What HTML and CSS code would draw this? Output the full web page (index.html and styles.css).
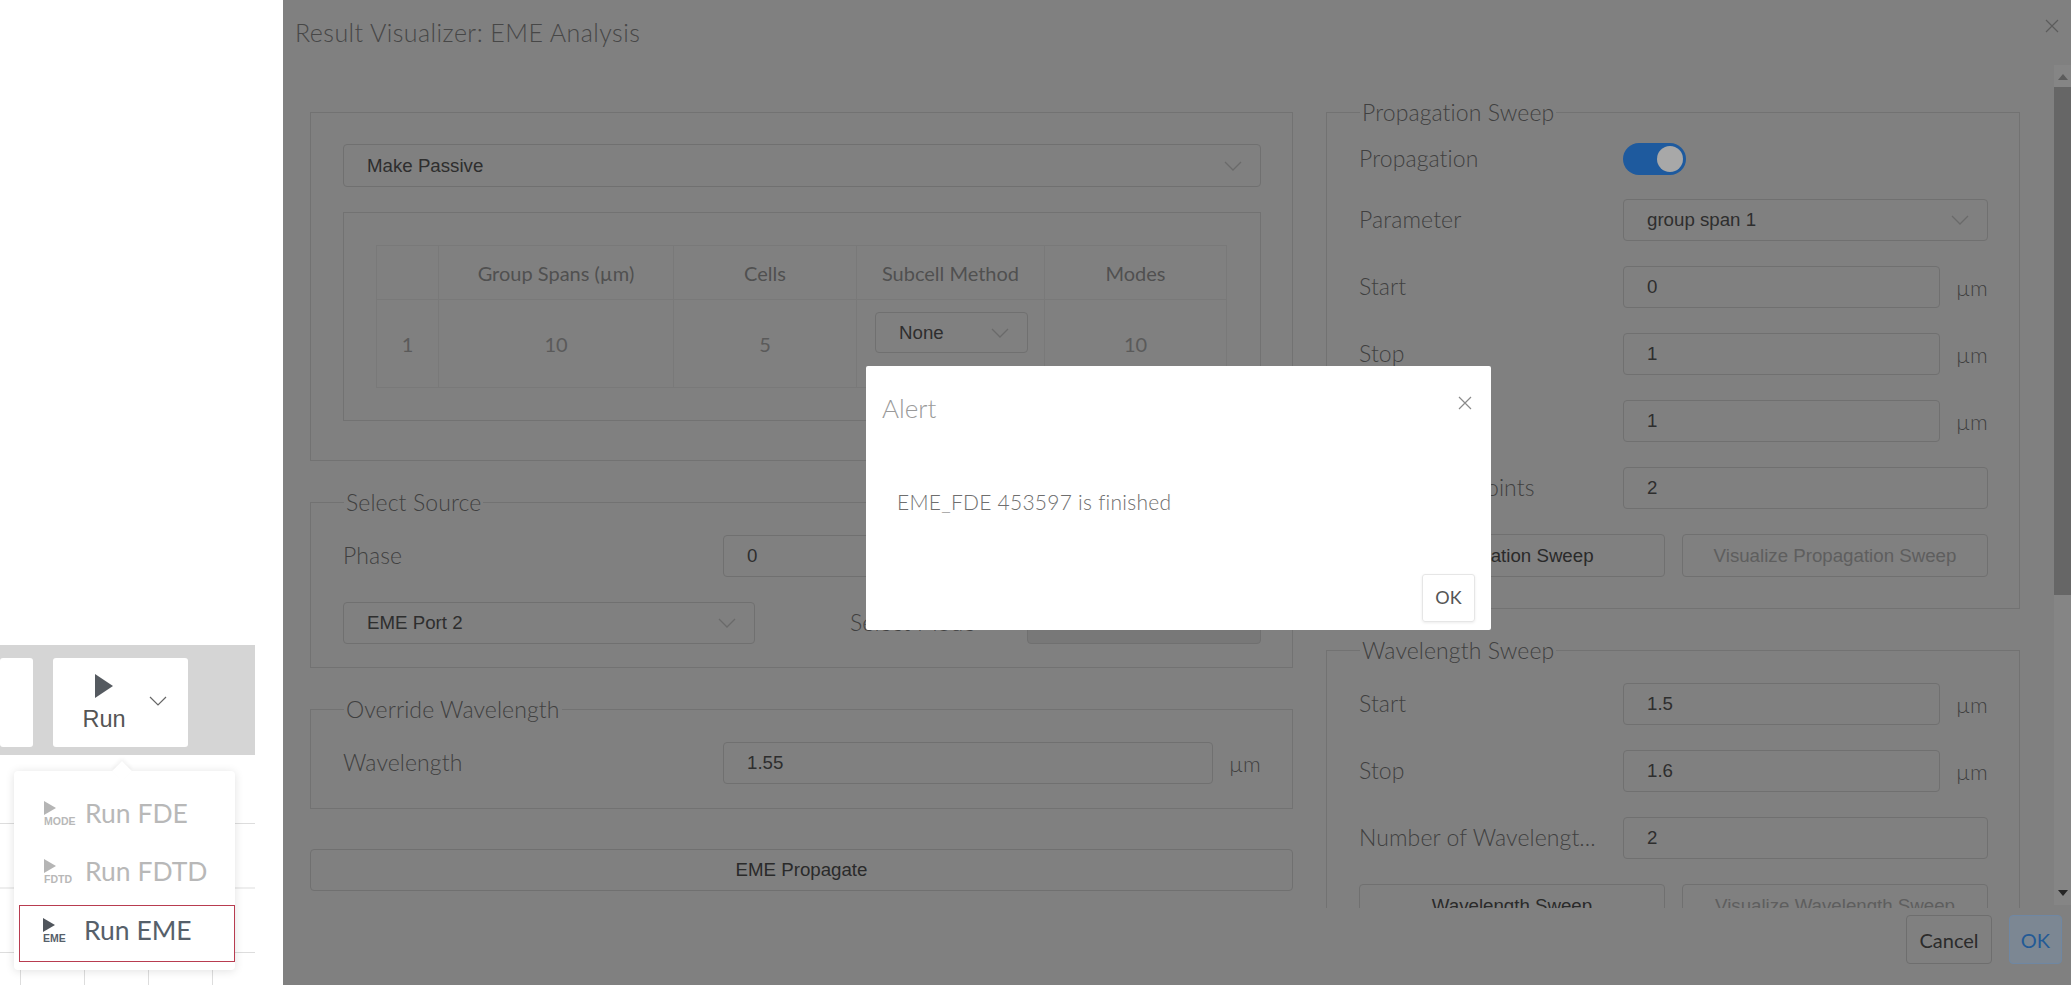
FILE: index.html
```html
<!DOCTYPE html>
<html>
<head>
    <meta charset="UTF-8">
    <link rel="stylesheet" href="styles.css">
</head>
<body>
<div class="workspace">
    <div class="toolbar">
        <div class="tool-btn tool-btn-cut"></div>
        <div class="tool-btn tool-run">
            <div class="run-stack">
                <svg class="run-play" width="20" height="24" viewBox="0 0 20 24"><path d="M1 0 L19 12 L1 24 Z" fill="#555a60"/></svg>
                <span>Run</span>
            </div>
            <svg class="run-chevron" width="18" height="10" viewBox="0 0 18 10"><path d="M1 1 L9 9 L17 1" fill="none" stroke="#666" stroke-width="1.2"/></svg>
        </div>
    </div>
    <div class="canvas">
        <div class="canvas-grid"></div>
    </div>
    <div class="run-menu">
        <div class="run-menu-item disabled">
            <div class="mini-icon">
                <svg width="12" height="14" viewBox="0 0 12 14"><path d="M0 0 L12 7 L0 14 Z" fill="#b5b5b5"/></svg>
                <span>MODE</span>
            </div>
            <span>Run FDE</span>
        </div>
        <div class="run-menu-item disabled">
            <div class="mini-icon">
                <svg width="12" height="14" viewBox="0 0 12 14"><path d="M0 0 L12 7 L0 14 Z" fill="#b5b5b5"/></svg>
                <span>FDTD</span>
            </div>
            <span>Run FDTD</span>
        </div>
        <div class="run-menu-item selected">
            <div class="mini-icon">
                <svg width="12" height="14" viewBox="0 0 12 14"><path d="M0 0 L12 7 L0 14 Z" fill="#50555c"/></svg>
                <span>EME</span>
            </div>
            <span>Run EME</span>
        </div>
    </div>
</div>

<div class="visualizer">
    <div class="vis-header">
        <span class="vis-title">Result Visualizer: EME Analysis</span>
        <svg class="vis-close" width="14" height="14" viewBox="0 0 14 14"><path d="M1 1 L13 13 M13 1 L1 13" stroke="#5c5c5c" stroke-width="1.2"/></svg>
    </div>

    <div class="vis-body">
        <div class="vis-scroll">
            <div class="col col-left">
                <fieldset class="group group-plain">
                    <div class="select wide"><span>Make Passive</span><svg class="chev" width="18" height="10" viewBox="0 0 18 10"><path d="M1 1 L9 9 L17 1"/></svg></div>
                    <div class="table-box">
                        <table class="span-table">
                            <tr class="head">
                                <th class="c1"></th>
                                <th class="c2">Group Spans (µm)</th>
                                <th class="c3">Cells</th>
                                <th class="c4">Subcell Method</th>
                                <th class="c5">Modes</th>
                            </tr>
                            <tr class="data">
                                <td>1</td>
                                <td>10</td>
                                <td>5</td>
                                <td class="top">
                                    <div class="select cell-select"><span>None</span><svg class="chev" width="18" height="10" viewBox="0 0 18 10"><path d="M1 1 L9 9 L17 1"/></svg></div>
                                </td>
                                <td>10</td>
                            </tr>
                        </table>
                    </div>
                </fieldset>

                <fieldset class="group">
                    <legend>Select Source</legend>
                    <div class="rows">
                        <div class="row">
                            <label class="label label-left">Phase</label>
                            <div class="field">0</div>
                            <span class="unit">deg</span>
                        </div>
                        <div class="row">
                            <div class="select port-select"><span>EME Port 2</span><svg class="chev" width="18" height="10" viewBox="0 0 18 10"><path d="M1 1 L9 9 L17 1"/></svg></div>
                            <label class="label mode-label">Select Mode</label>
                            <div class="field field-disabled"></div>
                        </div>
                    </div>
                </fieldset>

                <fieldset class="group group-single">
                    <legend>Override Wavelength</legend>
                    <div class="rows">
                        <div class="row">
                            <label class="label label-left">Wavelength</label>
                            <div class="field">1.55</div>
                            <span class="unit">µm</span>
                        </div>
                    </div>
                </fieldset>

                <div class="btn btn-propagate">EME Propagate</div>
            </div>

            <div class="col col-right">
                <fieldset class="group">
                    <legend>Propagation Sweep</legend>
                    <div class="rows">
                        <div class="row row-toggle">
                            <label class="label">Propagation</label>
                            <div class="toggle"><div class="knob"></div></div>
                        </div>
                        <div class="row">
                            <label class="label">Parameter</label>
                            <div class="select grow"><span>group span 1</span><svg class="chev" width="18" height="10" viewBox="0 0 18 10"><path d="M1 1 L9 9 L17 1"/></svg></div>
                        </div>
                        <div class="row">
                            <label class="label">Start</label>
                            <div class="field">0</div>
                            <span class="unit">µm</span>
                        </div>
                        <div class="row">
                            <label class="label">Stop</label>
                            <div class="field">1</div>
                            <span class="unit">µm</span>
                        </div>
                        <div class="row">
                            <label class="label">Step</label>
                            <div class="field">1</div>
                            <span class="unit">µm</span>
                        </div>
                        <div class="row">
                            <label class="label">Number of points</label>
                            <div class="field">2</div>
                        </div>
                        <div class="row btn-row">
                            <div class="btn">Propagation Sweep</div>
                            <div class="btn btn-off">Visualize Propagation Sweep</div>
                        </div>
                    </div>
                </fieldset>

                <fieldset class="group">
                    <legend>Wavelength Sweep</legend>
                    <div class="rows">
                        <div class="row">
                            <label class="label">Start</label>
                            <div class="field">1.5</div>
                            <span class="unit">µm</span>
                        </div>
                        <div class="row">
                            <label class="label">Stop</label>
                            <div class="field">1.6</div>
                            <span class="unit">µm</span>
                        </div>
                        <div class="row">
                            <label class="label">Number of Wavelengt...</label>
                            <div class="field">2</div>
                        </div>
                        <div class="row btn-row">
                            <div class="btn">Wavelength Sweep</div>
                            <div class="btn btn-off">Visualize Wavelength Sweep</div>
                        </div>
                    </div>
                </fieldset>
            </div>
        </div>

        <div class="scrollbar">
            <div class="arrow-up"></div>
            <div class="thumb"></div>
            <div class="arrow-down"></div>
        </div>
    </div>

    <div class="vis-footer">
        <div class="foot-btn">Cancel</div>
        <div class="foot-btn foot-ok">OK</div>
    </div>
</div>

<div class="alert">
    <div class="alert-head">
        <span class="alert-title">Alert</span>
        <svg class="alert-close" width="14" height="14" viewBox="0 0 14 14"><path d="M1 1 L13 13 M13 1 L1 13" stroke="#8a8a8a" stroke-width="1.2"/></svg>
    </div>
    <div class="alert-text">EME_FDE 453597 is finished</div>
    <div class="alert-foot">
        <div class="alert-ok">OK</div>
    </div>
</div>
</body>
</html>
```

FILE: styles.css
```css
* {
    margin: 0;
    padding: 0;
    box-sizing: border-box;
}

body {
    width: 2071px;
    height: 985px;
    overflow: hidden;
    display: flex;
    background-color: #ffffff;
    font-family: Lato, "Open Sans", sans-serif;
    font-weight: 300;
    position: relative;
}

/* left side, not dimmed */
.workspace {
    width: 283px;
    flex: none;
    position: relative;
    display: flex;
    flex-direction: column;
    padding-top: 645px;
}

.toolbar {
    width: 255px;
    height: 110px;
    background-color: #d5d5d5;
    display: flex;
    gap: 20px;
    padding-top: 13px;
}

.tool-btn {
    height: 89px;
    background-color: #ffffff;
    border-radius: 3px;
}

.tool-btn-cut {
    width: 33px;
}

.tool-run {
    width: 135px;
    display: flex;
    align-items: flex-start;
}

.run-stack {
    width: 102px;
    padding-top: 16px;
    display: flex;
    flex-direction: column;
    align-items: center;
    font-family: "Liberation Sans", sans-serif;
    font-weight: 400;
    font-size: 23.5px;
    color: #555;
    line-height: 28px;
}

.run-play {
    display: block;
    margin-bottom: 7px;
}

.run-chevron {
    margin-top: 38px;
    margin-left: -6px;
}

.canvas {
    width: 255px;
    flex: 1;
    display: flex;
    padding-top: 68px;
}

.canvas-grid {
    flex: 1;
    background-image:
        linear-gradient(#dddddd 1px, transparent 1px),
        linear-gradient(90deg, #dddddd 1px, transparent 1px);
    background-size: 64px 64.5px;
    background-position: 20px 0;
}

.run-menu {
    position: absolute;
    left: 14px;
    top: 771px;
    width: 221px;
    height: 199px;
    background-color: #ffffff;
    border-radius: 4px;
    box-shadow: 0 1px 10px rgba(0, 0, 0, 0.12);
    padding-top: 13px;
    display: flex;
    flex-direction: column;
}

.run-menu::before {
    content: "";
    position: absolute;
    left: 101px;
    top: -7px;
    width: 14px;
    height: 14px;
    background-color: #ffffff;
    transform: rotate(45deg);
    box-shadow: -2px -2px 4px rgba(0, 0, 0, 0.05);
}

.run-menu-item {
    height: 58px;
    display: flex;
    align-items: center;
    font-size: 26.5px;
    font-family: Lato, sans-serif;
    font-weight: 400;
    color: #56606a;
    padding-left: 25px;
    gap: 8px;
    margin-left: 5px;
    position: relative;
}

.run-menu-item.disabled {
    color: #b8b8b8;
}

.run-menu-item.selected {
    height: 57px;
    margin-top: 5px;
    border: 1.5px solid #b83c50;
    padding-left: 23px;
    padding-bottom: 7px;
}

.mini-icon {
    width: 33px;
    display: flex;
    flex-direction: column;
    align-items: flex-start;
    font-family: "Liberation Sans", sans-serif;
    font-weight: 700;
    font-size: 10.5px;
    line-height: 10px;
}

.mini-icon svg {
    display: block;
}

.mini-icon span {
    margin-top: 1px;
}

/* dimmed dialog */
.visualizer {
    flex: 1;
    background-color: #808080;
    display: flex;
    flex-direction: column;
    height: 985px;
}

.vis-header {
    height: 66px;
    flex: none;
    display: flex;
    justify-content: space-between;
    padding: 17px 12px 0 12px;
}

.vis-title {
    font-size: 25px;
    letter-spacing: 0.45px;
    line-height: 30px;
    color: #474747;
}

.vis-close {
    margin-top: 2px;
}

.vis-body {
    height: 842px;
    flex: none;
    display: flex;
}

.vis-scroll {
    flex: 1;
    overflow: hidden;
    display: flex;
    gap: 33px;
    padding-left: 27px;
    padding-right: 34px;
}

.col {
    display: flex;
    flex-direction: column;
    gap: 29px;
}

.col-left {
    width: 983px;
    padding-top: 46px;
}

.col-right {
    width: 694px;
    padding-top: 34px;
}

.group {
    border: 1px solid #727272;
    padding: 0 31px 23px 32px;
    min-width: 0;
}

.col-right .group {
    padding-bottom: 31px;
}

.group-single {
    padding-bottom: 24px;
}

.group legend {
    margin-left: 1px;
    padding: 0 2px;
    height: 24px;
    line-height: 24px;
    font-size: 23px;
    letter-spacing: 0.1px;
    color: #404040;
}

.group-plain {
    padding: 31px 31px 39px 32px;
    height: 349px;
}

.rows {
    padding-top: 21px;
    display: flex;
    flex-direction: column;
    gap: 25px;
}

.row {
    display: flex;
    align-items: center;
    height: 42px;
}

.row-toggle {
    height: 32px;
    margin-top: -2px;
    margin-bottom: -1px;
}

.label {
    flex: none;
    width: 264px;
    font-size: 23px;
    letter-spacing: 0.1px;
    padding-bottom: 2px;
    color: #404040;
    white-space: nowrap;
}

.label-left {
    width: 380px;
}

.field, .select {
    height: 42px;
    border: 1px solid #707070;
    border-radius: 4px;
    font-family: "Liberation Sans", sans-serif;
    font-weight: 400;
    font-size: 18.7px;
    color: #2e2e2e;
    display: flex;
    align-items: center;
    padding-left: 23px;
}

.field {
    flex: 1;
}

.field-disabled {
    flex: none;
    width: 234px;
    background-color: #787878;
}

.select {
    justify-content: space-between;
    padding-right: 18px;
}

.grow {
    flex: 1;
}

.select.wide {
    height: 43px;
}

.chev {
    flex: none;
}

.chev path {
    fill: none;
    stroke: #6a6a6a;
    stroke-width: 1.3;
}

.unit {
    flex: none;
    width: 32px;
    margin-left: 16px;
    font-size: 22px;
    color: #404040;
}

.port-select {
    width: 412px;
}

.mode-label {
    width: 177px;
    margin-left: 95px;
}

.table-box {
    margin-top: 25px;
    border: 1px solid #727272;
    height: 209px;
    padding: 32px;
}

.span-table {
    width: 850px;
    table-layout: fixed;
    border-collapse: collapse;
    font-size: 20px;
    font-weight: 400;
    color: #5a5a5a;
    text-align: center;
}

.span-table th, .span-table td {
    border: 1px solid #797979;
}

.span-table th {
    font-weight: 400;
    color: #505050;
}

.head {
    height: 54px;
}

.data {
    height: 88px;
}

.c1 { width: 62px; }
.c2 { width: 235px; }
.c3 { width: 183px; }
.c4 { width: 188px; }
.c5 { width: 182px; }

.span-table td.top {
    vertical-align: top;
    padding: 12px 16px 0 18px;
}

.cell-select {
    height: 41px;
    text-align: left;
}

.btn {
    height: 42px;
    border: 1px solid #707070;
    border-radius: 4px;
    font-family: "Liberation Sans", sans-serif;
    font-weight: 400;
    font-size: 18.7px;
    color: #2a2a2a;
    display: flex;
    align-items: center;
    justify-content: center;
}

.btn-propagate {
    flex: none;
    margin-top: 11px;
}

.btn-row {
    gap: 17px;
    height: 43px;
}

.btn-row .btn {
    flex: 1;
    height: 43px;
}

.btn-off {
    color: #5e5e5e;
}

.toggle {
    width: 63px;
    height: 32px;
    border-radius: 16px;
    background-color: #1e5a9e;
    display: flex;
    justify-content: flex-end;
    align-items: center;
    padding-right: 3px;
}

.knob {
    width: 26px;
    height: 26px;
    border-radius: 50%;
    background-color: #a8a8a8;
}

.scrollbar {
    flex: none;
    width: 17px;
    height: 840px;
    background-color: #858585;
    display: flex;
    flex-direction: column;
    align-items: center;
    margin-top: -1px;
}

.arrow-up {
    width: 0;
    height: 0;
    margin: 9px 0 7px;
    border-left: 5px solid transparent;
    border-right: 5px solid transparent;
    border-bottom: 6px solid #5c5c5c;
}

.thumb {
    width: 17px;
    height: 508px;
    background-color: #666666;
}

.arrow-down {
    width: 0;
    height: 0;
    margin-top: auto;
    margin-bottom: 9px;
    border-left: 5px solid transparent;
    border-right: 5px solid transparent;
    border-top: 6px solid #262626;
}

.vis-footer {
    flex: 1;
    display: flex;
    justify-content: flex-end;
    gap: 17px;
    padding: 7px 9px 0 0;
}

.foot-btn {
    width: 86px;
    height: 49px;
    border: 1px solid #6e6e6e;
    border-radius: 4px;
    font-size: 20px;
    font-weight: 400;
    color: #2b2b2b;
    display: flex;
    align-items: center;
    justify-content: center;
}

.foot-ok {
    width: 53px;
    color: #235a96;
    border-color: #6f87a3;
    background-color: #7c8793;
}

/* alert sits on top of everything */
.alert {
    position: absolute;
    left: 866px;
    top: 366px;
    width: 625px;
    height: 264px;
    background-color: #ffffff;
    border-radius: 2px;
    display: flex;
    flex-direction: column;
    padding: 0 16px;
}

.alert-head {
    height: 80px;
    display: flex;
    justify-content: space-between;
    padding-top: 27px;
}

.alert-title {
    font-size: 26px;
    line-height: 30px;
    color: #9a9a9a;
}

.alert-close {
    margin-top: 3px;
    margin-right: 3px;
}

.alert-text {
    padding: 42px 0 0 15px;
    font-size: 21px;
    letter-spacing: 0.25px;
    line-height: 28px;
    color: #6e6e6e;
}

.alert-foot {
    margin-top: auto;
    display: flex;
    justify-content: flex-end;
    padding-bottom: 8px;
}

.alert-ok {
    width: 53px;
    height: 48px;
    border: 1px solid #e6e6e6;
    border-radius: 3px;
    box-shadow: 0 1px 3px rgba(0, 0, 0, 0.08);
    font-size: 18px;
    font-weight: 400;
    padding-bottom: 2px;
    color: #555;
    display: flex;
    align-items: center;
    justify-content: center;
}
```
